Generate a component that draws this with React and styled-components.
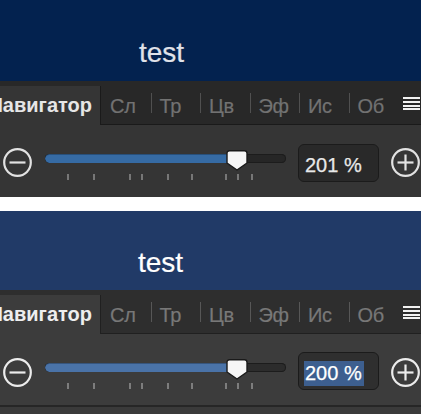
import React from "react";
import styled, { createGlobalStyle } from "styled-components";

const GlobalStyle = createGlobalStyle`
  html, body { margin: 0; padding: 0; background: #ffffff; }
  body {
    width: 421px;
    height: 414px;
    overflow: hidden;
    font-family: "Liberation Sans", Arial, Helvetica, sans-serif;
  }
`;

const themes = {
  dark: {
    header: "#03224f",
    headerH: 81,
    titlePad: 39,
    titleLeft: 139,
    title: "#e0e3ea",
    bar: "#282828",
    panel: "#353535",
    contentH: 72,
    line: "#1a1a1a",
    tabText: "#727272",
    active: "#e6e6e6",
    sep: "#505050",
    fill: "#366ba4",
    track: "#262626",
    box: "#292929",
    boxText: "#e8e8e8",
    icon: "#e2e2e2",
    tick: "#777777",
  },
  light: {
    header: "#213a67",
    headerH: 79,
    titlePad: 38,
    titleLeft: 138,
    title: "#ffffff",
    bar: "#2e2e2e",
    panel: "#3c3c3c",
    contentH: 71,
    line: "#202020",
    tabText: "#787878",
    active: "#eeeeee",
    sep: "#575757",
    fill: "#4a73a8",
    track: "#2c2c2c",
    box: "#2f2f2f",
    boxText: "#ffffff",
    icon: "#ececec",
    tick: "#7d7d7d",
  },
};

const Page = styled.div`
  display: flex;
  flex-direction: column;
  width: 421px;
  height: 414px;
  overflow: hidden;
  background: #ffffff;
`;

const Panel = styled.section`
  display: flex;
  flex-direction: column;
  flex: none;
`;

const Gap = styled.div`
  height: 14px;
  flex: none;
  background: #ffffff;
`;

const Header = styled.div`
  height: ${(p) => p.$t.headerH}px;
  box-sizing: border-box;
  background: ${(p) => p.$t.header};
  padding-top: ${(p) => p.$t.titlePad}px;
  padding-left: ${(p) => p.$t.titleLeft}px;
`;

const Title = styled.div`
  font-size: 28px;
  line-height: 28px;
  color: ${(p) => p.$t.title};
  -webkit-text-stroke: 0.2px ${(p) => p.$t.title};
`;

const TabBar = styled.div`
  display: flex;
  align-items: flex-end;
  height: 44px;
  box-sizing: border-box;
  background: ${(p) => p.$t.bar};
  box-shadow: inset 0 -1px 0 ${(p) => p.$t.line};
  overflow: hidden;
`;

const ActiveTab = styled.div`
  flex: none;
  width: 100px;
  height: 39px;
  display: flex;
  justify-content: flex-end;
  overflow: hidden;
  border-right: 1px solid ${(p) => p.$t.line};
  background: ${(p) => p.$t.panel};
  font-size: 20px;
  font-weight: 700;
  line-height: 39px;
  white-space: nowrap;
  color: ${(p) => p.$t.active};
`;

const ActiveLabel = styled.span`
  flex: none;
  padding-right: 8px;
`;

const Tab = styled.div`
  flex: none;
  width: 49.5px;
  height: 39px;
  box-sizing: border-box;
  padding-top: 1px;
  display: flex;
  white-space: nowrap;
  font-size: 20px;
  letter-spacing: -0.3px;
  line-height: 38px;
  color: ${(p) => p.$t.tabText};
  -webkit-text-stroke: 0.2px ${(p) => p.$t.tabText};
`;

const Sep = styled.span`
  flex: none;
  width: 1px;
  height: 20px;
  margin-top: 6px;
  margin-right: 8px;
  background: ${(p) => (p.$hidden ? "transparent" : p.$t.sep)};
`;

const Burger = styled.div`
  flex: none;
  align-self: flex-start;
  margin-top: 16px;
  margin-left: 5px;
  width: 17px;
  display: flex;
  flex-direction: column;
  gap: 1.8px;
`;

const BurgerBar = styled.span`
  height: 2px;
  background: #f2f2f2;
`;

const Content = styled.div`
  height: ${(p) => p.$t.contentH}px;
  display: flex;
  align-items: flex-start;
  padding-left: 3px;
  background: ${(p) => p.$t.panel};
`;

const RoundButton = styled.svg`
  flex: none;
  width: 29px;
  height: 29px;
  margin-top: ${(p) => (p.$variant === "light" ? 24 : 23)}px;
  margin-left: ${(p) => p.$ml || 0}px;
`;

const Slider = styled.div`
  flex: none;
  position: relative;
  width: 241px;
  height: 30px;
  margin-left: 13px;
  margin-top: 25px;
  display: flex;
  flex-direction: column;
`;

const Track = styled.div`
  margin-top: 4px;
  height: 9px;
  border-radius: 5px;
  background: ${(p) => p.$t.track};
  box-shadow: inset 0 0 0 1px #1c1c1c;
  overflow: hidden;
  display: flex;
`;

const Fill = styled.div`
  height: 100%;
  background: ${(p) => p.$t.fill};
  border-radius: 5px 0 0 5px;
  box-shadow: inset 0 1px 0 rgba(0, 0, 0, 0.25);
`;

const Ticks = styled.div`
  position: relative;
  margin-top: 11px;
  height: 6px;
`;

const Tick = styled.span`
  position: absolute;
  top: 0;
  width: 2px;
  height: 6px;
  background: ${(p) => p.$t.tick};
`;

const Thumb = styled.svg`
  position: absolute;
  top: 0;
  width: 22px;
  height: 21px;
`;

const ZoomBox = styled.div`
  flex: none;
  width: 81px;
  height: 38px;
  box-sizing: border-box;
  margin-left: 12px;
  margin-top: ${(p) => (p.$variant === "light" ? 18 : 19)}px;
  padding-top: 8px;
  padding-left: 5px;
  border: 1px solid #1b1b1b;
  border-radius: 6px;
  background: ${(p) => p.$t.box};
  display: flex;
  align-items: flex-start;
`;

const ZoomValue = styled.span`
  font-size: 20px;
  line-height: 25px;
  padding: 0 2px 0 1px;
  color: ${(p) => p.$t.boxText};
  -webkit-text-stroke: 0.25px ${(p) => p.$t.boxText};
  background: ${(p) => (p.$selected ? "#3d5f8f" : "transparent")};
`;

const Footer = styled.div`
  flex: none;
  height: 9px;
  border-top: 2px solid #262626;
  background: #3a3a3a;
`;

const TICKS = [22, 48, 84, 96, 122, 146, 180, 192, 206];
const TABS = ["Сл", "Тр", "Цв", "Эф", "Ис", "Об"];

function MinusIcon({ t, variant }) {
  return (
    <RoundButton $variant={variant} viewBox="0 0 29 29">
      <circle cx="14.5" cy="14.5" r="13.3" fill="none" stroke={t.icon} strokeWidth="2.2" />
      <line x1="6.5" y1="14.5" x2="22.5" y2="14.5" stroke={t.icon} strokeWidth="2.2" />
    </RoundButton>
  );
}

function PlusIcon({ t, variant }) {
  return (
    <RoundButton $variant={variant} $ml={12} viewBox="0 0 29 29">
      <circle cx="14.5" cy="14.5" r="13.3" fill="none" stroke={t.icon} strokeWidth="2.2" />
      <line x1="6.5" y1="14.5" x2="22.5" y2="14.5" stroke={t.icon} strokeWidth="2.2" />
      <line x1="14.5" y1="6.5" x2="14.5" y2="22.5" stroke={t.icon} strokeWidth="2.2" />
    </RoundButton>
  );
}

function NavigatorPanel({ variant, value, selected }) {
  const t = themes[variant];
  const fillWidth = 192;
  return (
    <Panel>
      <Header $t={t}>
        <Title $t={t}>test</Title>
      </Header>
      <TabBar $t={t}>
        <ActiveTab $t={t}>
          <ActiveLabel>Навигатор</ActiveLabel>
        </ActiveTab>
        {TABS.map((label, i) => (
          <Tab key={label} $t={t}>
            <Sep $t={t} $hidden={i === 0} />
            {label}
          </Tab>
        ))}
        <Burger>
          <BurgerBar />
          <BurgerBar />
          <BurgerBar />
          <BurgerBar />
        </Burger>
      </TabBar>
      <Content $t={t}>
        <MinusIcon t={t} variant={variant} />
        <Slider>
          <Track $t={t}>
            <Fill $t={t} style={{ width: fillWidth }} />
          </Track>
          <Ticks>
            {TICKS.map((x) => (
              <Tick key={x} $t={t} style={{ left: x }} />
            ))}
          </Ticks>
          <Thumb viewBox="0 0 22 21" style={{ left: fillWidth - 11 }}>
            <path
              d="M3.5 0.8 H18.5 Q21 0.8 21 3.3 V13 L11 20 L1 13 V3.3 Q1 0.8 3.5 0.8 Z"
              fill="#f6f6f6"
              stroke="#1a1a1a"
              strokeWidth="1.4"
              strokeLinejoin="round"
            />
          </Thumb>
        </Slider>
        <ZoomBox $t={t} $variant={variant}>
          <ZoomValue $t={t} $selected={selected}>{value}</ZoomValue>
        </ZoomBox>
        <PlusIcon t={t} variant={variant} />
      </Content>
    </Panel>
  );
}

export default function App() {
  return (
    <>
      <GlobalStyle />
      <Page>
        <NavigatorPanel variant="dark" value="201 %" />
        <Gap />
        <NavigatorPanel variant="light" value="200 %" selected />
        <Footer />
      </Page>
    </>
  );
}
